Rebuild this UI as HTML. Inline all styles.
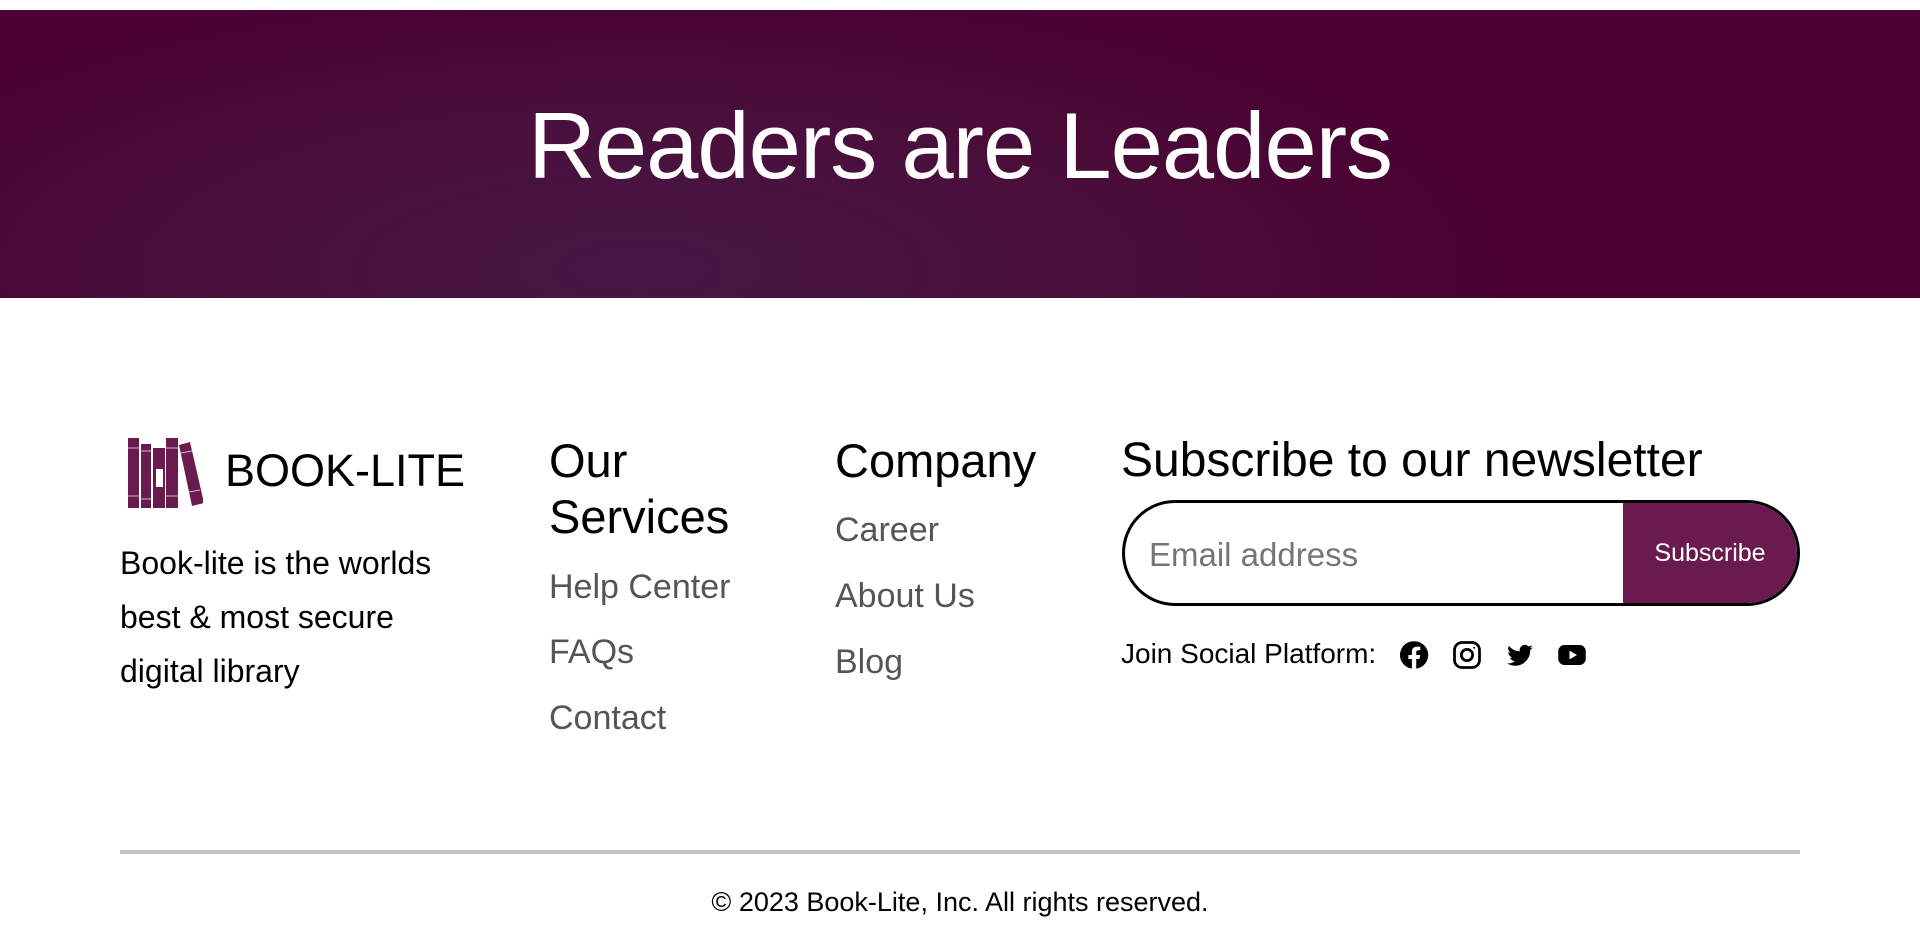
<!DOCTYPE html>
<html><head><meta charset="utf-8"><style>
*{margin:0;padding:0;box-sizing:border-box}
body{width:1920px;height:948px;background:#fff;font-family:"Liberation Sans","DejaVu Sans",sans-serif;position:relative;overflow:hidden;color:#000}
.banner{position:absolute;left:0;top:10px;width:1920px;height:288px;background:radial-gradient(ellipse 900px 300px at 640px 260px,#461845 0%,#4a0f3c 50%,#4a0030 100%)}
.banner h1{position:absolute;left:0;width:1920px;top:82px;text-align:center;color:#fff;font-size:94px;font-weight:normal;letter-spacing:-1px}
.a{position:absolute;white-space:nowrap}
.h{font-size:47px;line-height:56px}
.l{font-size:34px;color:#555}
</style></head><body>
<div class="banner"><h1>Readers are Leaders</h1></div>

<svg class="a" style="left:127px;top:437px" width="76" height="74" viewBox="0 0 76 74">
<g fill="#6a1a4f">
<rect x="1" y="1" width="11" height="70"/>
<rect x="14" y="7" width="10" height="64"/>
<rect x="26" y="11" width="12" height="60"/>
<rect x="39" y="1" width="12" height="70"/>
<polygon points="52,8 63,5 77,66 65,69"/>
</g>
<g stroke="#fff" stroke-width="1" opacity=".7"><line x1="1" y1="11" x2="12" y2="11"/><line x1="1" y1="59" x2="12" y2="59"/><line x1="14" y1="14" x2="24" y2="14"/><line x1="14" y1="62" x2="24" y2="62"/><line x1="39" y1="11" x2="51" y2="11"/><line x1="39" y1="59" x2="51" y2="59"/><line x1="54" y1="16" x2="65" y2="14"/><line x1="62" y1="55" x2="73" y2="53"/></g>
<rect x="29" y="32" width="7" height="18" fill="#fff"/>
</svg>
<div class="a" style="left:225px;top:445px;font-size:45px">BOOK-LITE</div>
<div class="a" style="left:120px;top:536px;font-size:32px;line-height:54px;white-space:normal;width:345px">Book-lite is the worlds best &amp; most secure digital library</div>

<div class="a h" style="left:549px;top:433px">Our<br>Services</div>
<div class="a l" style="left:549px;top:568px">Help Center</div>
<div class="a l" style="left:549px;top:633px">FAQs</div>
<div class="a l" style="left:549px;top:699px">Contact</div>

<div class="a h" style="left:835px;top:433px">Company</div>
<div class="a l" style="left:835px;top:511px">Career</div>
<div class="a l" style="left:835px;top:577px">About Us</div>
<div class="a l" style="left:835px;top:643px">Blog</div>

<div class="a h" style="left:1121px;top:433px;font-size:48px">Subscribe to our newsletter</div>
<div class="a" style="left:1122px;top:500px;width:678px;height:106px;border:3px solid #000;border-radius:53px;overflow:hidden">
<div style="position:absolute;left:24px;top:33px;font-size:33px;color:#757575">Email address</div>
<div style="position:absolute;left:498px;top:0;right:0;bottom:0;background:#6a1a4f;color:#fff;font-size:25px;display:flex;align-items:center;justify-content:center">Subscribe</div>
</div>
<div class="a" style="left:1121px;top:638px;font-size:28px">Join Social Platform:</div>
<svg class="a" style="left:1399px;top:640px" width="30" height="30" viewBox="0 0 24 24"><path fill="#000" d="M12 1a11 11 0 0 0-1.7 21.9V15.2H7.5V12h2.8V9.6c0-2.8 1.6-4.3 4.2-4.300 1.2 0 2.5.2 2.5.2v2.7h-1.4c-1.4 0-1.8.9-1.8 1.8V12h3.1l-.5 3.2h-2.6v7.7A11 11 0 0 0 12 1z"/></svg>
<svg class="a" style="left:1452px;top:640px" width="30" height="30" viewBox="0 0 24 24" fill="none" stroke="#000" stroke-width="2.2"><rect x="2" y="2" width="20" height="20" rx="6"/><circle cx="12" cy="12" r="4.5"/><circle cx="17.8" cy="6.2" r=".8" fill="#000" stroke="none"/></svg>
<svg class="a" style="left:1505px;top:642px" width="30" height="28" viewBox="0 0 24 24"><path fill="#000" d="M23 4.6a9 9 0 0 1-2.6.7 4.5 4.5 0 0 0 2-2.5 9 9 0 0 1-2.9 1.1 4.5 4.5 0 0 0-7.7 4.1A12.8 12.8 0 0 1 2.5 3.3a4.5 4.5 0 0 0 1.4 6 4.5 4.5 0 0 1-2-.6 4.5 4.5 0 0 0 3.6 4.5 4.5 4.5 0 0 1-2 .1 4.5 4.5 0 0 0 4.2 3.1A9 9 0 0 1 1 18.3a12.8 12.8 0 0 0 19.7-11.4A9 9 0 0 0 23 4.6z"/></svg>
<svg class="a" style="left:1557px;top:640px" width="30" height="30" viewBox="0 0 24 24"><rect x="1" y="4" width="22" height="16" rx="5" fill="#000"/><path fill="#fff" d="M10 8.5v7l6-3.5z"/></svg>

<div class="a" style="left:120px;top:850px;width:1680px;height:4px;background:#c4c4c4"></div>
<div class="a" style="left:0;width:1920px;top:887px;text-align:center;font-size:27px">© 2023 Book-Lite, Inc. All rights reserved.</div>
</body></html>
